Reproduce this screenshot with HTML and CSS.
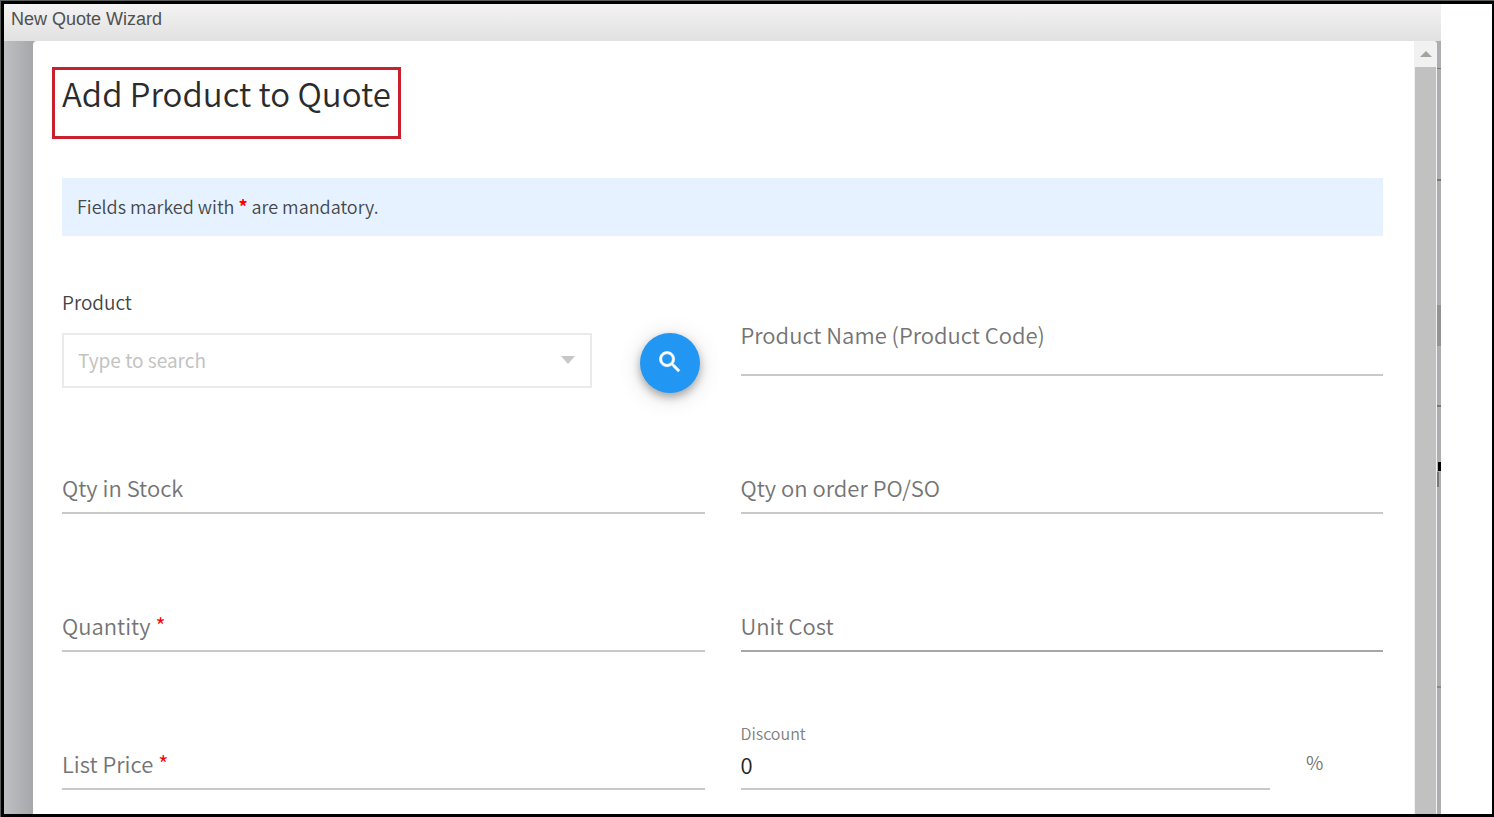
FILE: index.html
```html
<!DOCTYPE html>
<html lang="en">
<head>
<meta charset="utf-8">
<title>New Quote Wizard</title>
<link rel="stylesheet" href="styles.css">
</head>
<body>
<div class="frame">
  <div class="window">
    <header class="titlebar">New Quote Wizard</header>
    <div class="backdrop">
      <main class="modal">
        <form class="content">
          <h1 class="heading">Add Product to Quote</h1>
          <p class="notice">Fields marked with <b class="required">*</b> are mandatory.</p>

          <div class="row">
            <div class="lookup">
              <div class="lookup-field">
                <label class="lookup-label" for="product">Product</label>
                <div class="combo">
                  <input class="combo-input" id="product" type="text" placeholder="Type to search">
                  <svg class="combo-arrow" viewBox="0 0 14 8" aria-hidden="true"><path d="M0 0h14L7 8z"/></svg>
                </div>
              </div>
              <button class="search" type="button" aria-label="Search products">
                <svg class="search-icon" viewBox="0 0 24 24" aria-hidden="true"><path d="M15.5 14h-.79l-.28-.27C15.41 12.59 16 11.11 16 9.5 16 5.91 13.09 3 9.5 3S3 5.91 3 9.5 5.91 16 9.5 16c1.61 0 3.09-.59 4.23-1.57l.27.28v.79l5 4.99L20.49 19l-4.99-5zm-6 0C7.01 14 5 11.99 5 9.5S7.01 5 9.5 5 14 7.01 14 9.5 11.99 14 9.5 14z"/></svg>
              </button>
            </div>
            <div class="field field-name">
              <label class="label" for="name">Product Name (Product Code)</label>
              <textarea class="control control-tall" id="name"></textarea>
            </div>
          </div>

          <div class="row row-stock">
            <div class="field">
              <label class="label" for="stock">Qty in Stock</label>
              <input class="control" id="stock" type="text">
            </div>
            <div class="field">
              <label class="label" for="order">Qty on order PO/SO</label>
              <input class="control" id="order" type="text">
            </div>
          </div>

          <div class="row">
            <div class="field">
              <label class="label" for="quantity">Quantity <span class="required">*</span></label>
              <input class="control" id="quantity" type="text">
            </div>
            <div class="field">
              <label class="label" for="cost">Unit Cost</label>
              <input class="control control-dark" id="cost" type="text">
            </div>
          </div>

          <div class="row">
            <div class="field">
              <label class="label" for="price">List Price <span class="required">*</span></label>
              <input class="control" id="price" type="text">
            </div>
            <div class="discount">
              <div class="discount-field">
                <label class="small-label" for="discount">Discount</label>
                <input class="control" id="discount" type="text" value="0">
              </div>
              <span class="unit">%</span>
            </div>
          </div>
        </form>
        <div class="scrollbar" aria-hidden="true">
          <svg class="scroll-arrow" viewBox="0 0 12 6"><path d="M6 0l6 6H0z"/></svg>
          <div class="thumb"></div>
        </div>
      </main>
    </div>
  </div>
</div>
</body>
</html>
```
FILE: styles.css
```css
* {
  box-sizing: border-box;
}

body {
  margin: 0;
  background: #5a5e5c;
  font-family: "Noto Sans CJK SC", "Noto Sans", sans-serif;
  font-weight: 350;
  color: #333;
}

.frame {
  display: flex;
  height: 100vh;
  padding: 1px 0 0 1px;
}

.window {
  flex: 1;
  display: flex;
  flex-direction: column;
  min-width: 0;
  overflow: hidden;
  border: 3px solid #000;
  border-right: 0;
}

.frame::after {
  content: "";
  width: 53px;
  box-sizing: border-box;
  border: solid #000;
  border-width: 3px 2px 3px 0;
  background: #fff;
}

.titlebar {
  flex: none;
  height: 37px;
  padding-left: 7px;
  background: linear-gradient(#f3f3f3, #e1e1e1);
  font: 18px/31px "Liberation Sans", Arial, sans-serif;
  color: #505050;
}

.backdrop {
  flex: 1;
  min-height: 0;
  display: flex;
  padding: 0 4px 0 29px;
  background:
    linear-gradient(#777, #777) right 0 top 27px / 4px 1px no-repeat,
    linear-gradient(#777, #777) right 0 top 138px / 4px 2px no-repeat,
    linear-gradient(#929394, #929394) right 0 top 264px / 4px 41px no-repeat,
    linear-gradient(#777, #777) right 0 top 364px / 4px 2px no-repeat,
    linear-gradient(#000, #000) right 0 top 421px / 3px 9px no-repeat,
    linear-gradient(#777, #777) right 2px top 431px / 2px 15px no-repeat,
    linear-gradient(#888, #888) right 0 top 645px / 4px 2px no-repeat,
    linear-gradient(90deg, #bfc0c3, #a6a7aa 29px, #adaeb1);
}

.modal {
  flex: 1;
  min-width: 0;
  display: flex;
  overflow: hidden;
  border-radius: 4px 4px 0 0;
  background: #fff;
}

.content {
  flex: 1;
  min-width: 0;
  padding: 26px 31px 0 29px;
}

.heading {
  width: fit-content;
  height: 72px;
  margin: 0 0 39px -10px;
  padding: 0 7px;
  border: 3px solid #c8202c;
  font-size: 33px;
  font-weight: 350;
  line-height: 46px;
  white-space: nowrap;
  color: #2b2b2b;
}

.notice {
  height: 58px;
  margin: 0 0 48px;
  padding: 0 15px;
  background: #e6f2ff;
  font-size: 18px;
  line-height: 56px;
  color: #44484c;
}

.required {
  color: #f00;
}

.row {
  display: grid;
  grid-template-columns: 1fr 1fr;
  column-gap: 36px;
  align-items: end;
  min-height: 69px;
  margin-bottom: 69px;
}

.row-stock {
  margin-top: -17px;
}

.lookup {
  display: flex;
  align-items: flex-end;
  gap: 48px;
  padding-right: 5px;
}

.lookup-field {
  flex: 1;
  margin-bottom: 5px;
}

.lookup-label {
  display: block;
  margin-bottom: 13px;
  font-size: 19px;
  line-height: 36px;
  color: #444;
}

.combo {
  display: flex;
  align-items: center;
  height: 55px;
  padding: 0 15px 0 14px;
  border: 2px solid #ebebeb;
}

.combo-input {
  flex: 1;
  min-width: 0;
  height: 51px;
  padding: 0 0 3px;
  border: 0;
  outline: 0;
  background: none;
  font: 19px "Noto Sans CJK SC", sans-serif;
}

.combo-input::placeholder {
  color: #c3c3c3;
}

.combo-arrow {
  width: 14px;
  height: 8px;
  margin-bottom: 2px;
  fill: #c8c8c8;
}

.search {
  display: grid;
  place-items: center;
  width: 60px;
  height: 60px;
  padding: 0;
  border: 0;
  border-radius: 50%;
  background: #2196f3;
  box-shadow: 0 4px 8px rgba(0, 0, 0, 0.3), 0 4px 24px rgba(0, 0, 0, 0.14);
}

.search-icon {
  width: 28px;
  height: 28px;
  margin-bottom: 2px;
  fill: #fff;
  stroke: #fff;
  stroke-width: 0.5;
}

.field {
  display: grid;
}

.field-name {
  align-self: start;
  padding-top: 32px;
}

.label,
.field .control {
  grid-area: 1 / 1;
}

.label {
  align-self: start;
  font-size: 22px;
  line-height: 36px;
  color: #747474;
}

.control {
  display: block;
  width: 100%;
  height: 45px;
  padding: 0 0 6px;
  border: 0;
  border-bottom: 2px solid #c8c8c8;
  border-radius: 0;
  outline: 0;
  resize: none;
  background: none;
  font: 350 22px "Noto Sans CJK SC", sans-serif;
  color: #222;
}

.control-tall {
  height: 60px;
}

.control-dark {
  border-bottom-color: #a6a6a6;
}

.discount {
  display: flex;
  align-items: flex-end;
}

.discount-field {
  flex: 1;
}

.small-label {
  display: block;
  margin-bottom: 2px;
  font-size: 16px;
  line-height: 20px;
  color: #808080;
}

.unit {
  width: 113px;
  padding: 0 0 8px 36px;
  font-size: 19px;
  line-height: 40px;
  color: #747474;
}

.scrollbar {
  flex: none;
  display: flex;
  flex-direction: column;
  align-items: center;
  width: 23px;
  padding-top: 10px;
  background: #f1f1f1;
}

.scroll-arrow {
  flex: none;
  width: 12px;
  height: 6px;
  margin-bottom: 10px;
  fill: #a3a3a3;
}

.thumb {
  flex: 1;
  width: 21px;
  background: #c1c1c1;
}
```
